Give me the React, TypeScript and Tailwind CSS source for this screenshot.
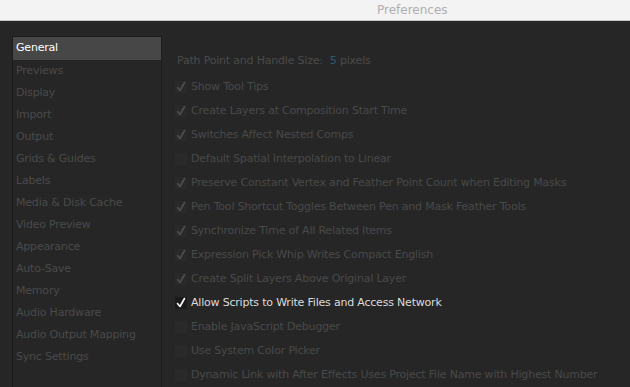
const sections = [
  "General",
  "Previews",
  "Display",
  "Import",
  "Output",
  "Grids & Guides",
  "Labels",
  "Media & Disk Cache",
  "Video Preview",
  "Appearance",
  "Auto-Save",
  "Memory",
  "Audio Hardware",
  "Audio Output Mapping",
  "Sync Settings",
];

const options = [
  { label: "Show Tool Tips", checked: true },
  { label: "Create Layers at Composition Start Time", checked: true },
  { label: "Switches Affect Nested Comps", checked: true },
  { label: "Default Spatial Interpolation to Linear", checked: false },
  { label: "Preserve Constant Vertex and Feather Point Count when Editing Masks", checked: true },
  { label: "Pen Tool Shortcut Toggles Between Pen and Mask Feather Tools", checked: true },
  { label: "Synchronize Time of All Related Items", checked: true },
  { label: "Expression Pick Whip Writes Compact English", checked: true },
  { label: "Create Split Layers Above Original Layer", checked: true },
  { label: "Allow Scripts to Write Files and Access Network", checked: true, active: true },
  { label: "Enable JavaScript Debugger", checked: false },
  { label: "Use System Color Picker", checked: false },
  { label: "Dynamic Link with After Effects Uses Project File Name with Highest Number", checked: false },
];

function Check({ color }: { color: string }) {
  return (
    <svg width="12" height="12" viewBox="0 0 12 12">
      <path d="M2.5 6.5 L5 9.5 L9.5 1.5" fill="none" stroke={color} strokeWidth="1.6" strokeLinecap="round" strokeLinejoin="round" />
    </svg>
  );
}

export default function App() {
  return (
    <div
      className="w-[630px] h-[387px] overflow-hidden bg-[#262626] flex flex-col text-[11px] tracking-[-0.2px]"
      style={{ fontFamily: '"Lucida Grande", "DejaVu Sans", sans-serif' }}
    >
      <div className="h-[21px] shrink-0 bg-[#f3f3f3] border-b border-[#c8c8c8] flex items-center pl-[377px] text-[12px] tracking-normal text-[#b0b0b0]">
        Preferences
      </div>
      <div className="flex flex-1 min-h-0">
        <div className="w-[150px] shrink-0 ml-[12px] mt-[15px] border border-[#1b1b1b] border-b-0 flex flex-col">
          {sections.map((s, i) => (
            <div
              key={s}
              className={`shrink-0 flex items-center pl-[3px] whitespace-nowrap ${
                i === 0 ? "h-[23px] bg-[#474747] text-white" : "h-[22px] text-[#4a4a4a] border-t border-[#242424]"
              }`}
            >
              {s}
            </div>
          ))}
        </div>
        <div className="flex-1 min-w-0 pl-[13px] pt-[29px] flex flex-col">
          <div className="h-[22px] flex items-center gap-[7px] pl-[2px] text-[#4a4a4a] whitespace-nowrap">
            <span>Path Point and Handle Size:</span>
            <span>
              <span className="text-[#2d5a78]">5</span> pixels
            </span>
          </div>
          <div className="flex flex-col mt-[3px]">
            {options.map((o) => (
              <div key={o.label} className="h-[24px] flex items-center gap-[4px] whitespace-nowrap">
                <div
                  className={`w-[12px] h-[12px] shrink-0 flex items-center justify-center ${
                    o.active ? "bg-[#1b1b1b]" : "bg-[#2a2a2a]"
                  }`}
                >
                  {o.checked ? <Check color={o.active ? "#ffffff" : "#4e4e4e"} /> : null}
                </div>
                <span className={o.active ? "text-[#dcdcdc]" : "text-[#494949]"}>{o.label}</span>
              </div>
            ))}
          </div>
        </div>
      </div>
    </div>
  );
}
